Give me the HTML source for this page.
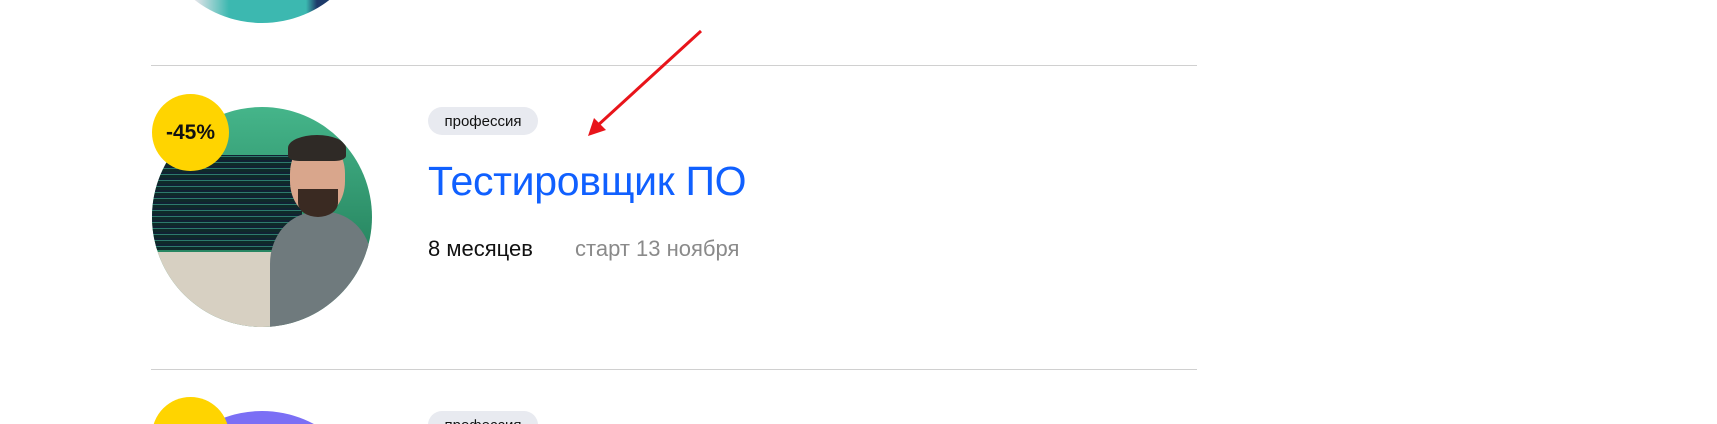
<!DOCTYPE html>
<html><head><meta charset="utf-8"><style>
*{margin:0;padding:0;box-sizing:border-box}
html,body{width:1717px;height:424px;overflow:hidden;background:#fff}
body{font-family:"Liberation Sans",sans-serif}
#w{position:relative;width:1717px;height:424px;overflow:hidden}
.abs{position:absolute}
.line{position:absolute;left:151px;width:1046px;height:1px;background:#d0d0d0}
.circ{position:absolute;border-radius:50%;overflow:hidden}
.badge{position:absolute;width:77px;height:77px;border-radius:50%;background:#ffd400;color:#111;font-weight:bold;font-size:21px;display:flex;align-items:center;justify-content:center}
.tag{position:absolute;left:428px;height:28px;width:110px;border-radius:14px;background:#e8eaf0;font-size:15px;color:#111;display:flex;align-items:center;justify-content:center}
.clip{position:absolute;overflow:hidden}
</style></head><body><div id="w">
<div class="clip" style="left:152px;top:0;width:220px;height:23px"><div class="circ" style="left:0;top:-197px;width:220px;height:220px;background:linear-gradient(90deg,#dfe3e8 0 20%,#3cb8b0 35% 70%,#1d3b6a 75%)"></div></div>
<div class="line" style="top:65px"></div>
<div class="circ" style="left:152px;top:107px;width:220px;height:220px;background:linear-gradient(180deg,#45b58a,#2a8a64 60%,#1f6f52)">
 <div class="abs" style="left:0;top:48px;width:150px;height:95px;background:repeating-linear-gradient(0deg,#0f2a2a 0 3px,#2c7a6c 3px 4px,#123 4px 6px);"></div>
 <div class="abs" style="left:0;top:145px;width:130px;height:75px;background:#d7d0c2"></div>
 <div class="abs" style="left:118px;top:105px;width:102px;height:115px;border-radius:45% 45% 0 0;background:#6f7a7d"></div>
 <div class="abs" style="left:138px;top:33px;width:55px;height:75px;border-radius:45%;background:#d9a68c"></div>
 <div class="abs" style="left:136px;top:28px;width:58px;height:26px;border-radius:50% 50% 20% 20%;background:#2f2a26"></div>
 <div class="abs" style="left:146px;top:82px;width:40px;height:28px;border-radius:0 0 50% 50%;background:#3a2a22"></div>
</div>
<div class="badge" style="left:152px;top:94px">-45%</div>
<div class="tag" style="top:107px">профессия</div>
<div class="abs" style="left:428px;top:157px;font-size:41px;line-height:48px;color:#1060ff;white-space:nowrap;letter-spacing:-0.3px">Тестировщик ПО</div>
<div class="abs" style="left:428px;top:236px;font-size:22px;line-height:26px;color:#111;white-space:nowrap">8 месяцев</div>
<div class="abs" style="left:575px;top:236px;font-size:22px;line-height:26px;color:#8a8a8a;white-space:nowrap">старт 13 ноября</div>
<svg class="abs" style="left:0;top:0" width="1717" height="424"><line x1="701" y1="31" x2="596" y2="127" stroke="#e8141a" stroke-width="3"/><polygon points="588,136 594,118 606,130" fill="#e8141a"/></svg>
<div class="line" style="top:369px"></div>
<div class="clip" style="left:152px;top:397px;width:400px;height:27px">
 <div class="circ" style="left:0;top:14px;width:220px;height:220px;background:#7b6ff5"></div>
 <div class="badge" style="left:0;top:0"></div>
 <div class="tag" style="left:276px;top:14px">профессия</div>
</div>
</div></body></html>
